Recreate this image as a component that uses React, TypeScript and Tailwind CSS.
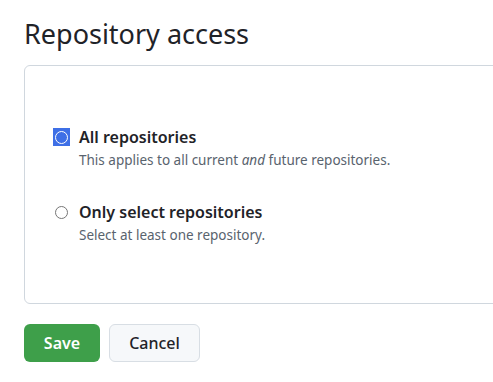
export default function App() {
  return (
    <div className="min-h-screen w-[493px] overflow-hidden bg-white pl-6 pt-[14px] font-['Noto_Sans','Open_Sans',sans-serif] text-[#1f2328]">
      <h2 className="text-[27px] font-normal leading-[40px]">Repository access</h2>

      <div className="mt-[11px] flex h-[239px] w-[520px] flex-col gap-[32px] rounded-md border border-[#d0d7de] pl-[28px] pt-[60px]">
        {/* All repositories */}
        <div className="flex items-start gap-[9px]">
          <div className="mt-[2px] flex h-[18px] w-[17px] items-center justify-center bg-[#3e6fe6]">
            <div className="flex h-[13px] w-[13px] items-center justify-center rounded-full border-[1.5px] border-white">
              <div className="h-[7px] w-[7px] rounded-full bg-[#3e6fe6]" />
            </div>
          </div>
          <div>
            <div className="text-[16px] font-semibold leading-[22px]">All repositories</div>
            <div className="mt-[3px] text-[13.5px] leading-[18px] text-[#59636e]">
              This applies to all current <em>and</em> future repositories.
            </div>
          </div>
        </div>

        {/* Only select repositories */}
        <div className="flex items-start gap-[9px]">
          <div className="mt-[2px] flex h-[18px] w-[17px] items-center justify-center">
            <div className="h-[13px] w-[13px] rounded-full border border-[#767676] bg-white" />
          </div>
          <div>
            <div className="text-[16px] font-semibold leading-[22px]">Only select repositories</div>
            <div className="mt-[3px] text-[13.5px] leading-[18px] text-[#59636e]">
              Select at least one repository.
            </div>
          </div>
        </div>
      </div>

      <div className="mt-[20px] flex gap-[9px]">
        <button className="h-[38px] w-[76px] rounded-md bg-[#3e9f4a] text-[16px] font-semibold text-white">
          Save
        </button>
        <button className="h-[38px] w-[91px] rounded-md border border-[#d8dee4] bg-[#f6f8fa] text-[16px] font-medium text-[#1f2328]">
          Cancel
        </button>
      </div>
    </div>
  );
}
